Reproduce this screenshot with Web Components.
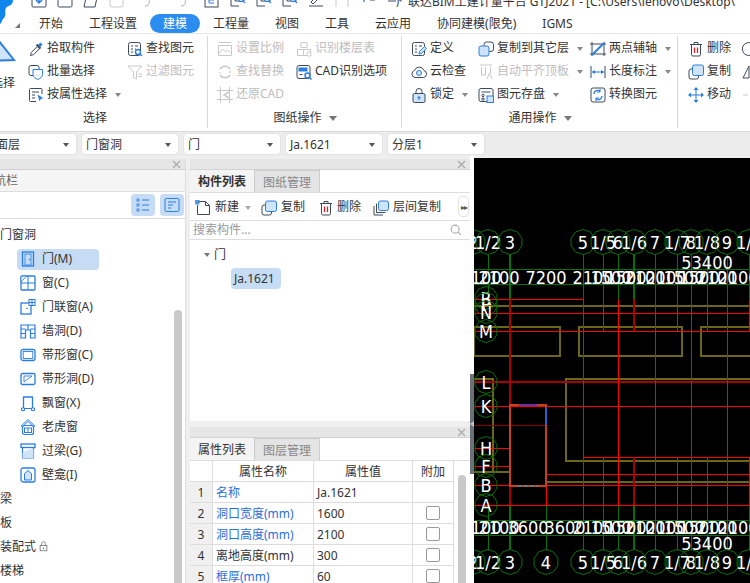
<!DOCTYPE html>
<html lang="zh">
<head>
<meta charset="utf-8">
<title>GTJ2021</title>
<style>
  html, body { margin: 0; padding: 0; width: 750px; height: 583px; overflow: hidden; background: #ececec; }
  body { font: 12px/1.2 "Noto Sans", "Noto Sans CJK SC", sans-serif; color: #333; }
</style>
</head>
<body>
<gtj-titlebar></gtj-titlebar>
<gtj-tabs></gtj-tabs>
<gtj-ribbon>
  <gtj-group label="选择" style="width:226px" cols="38px 99px 1fr" pad="8">
    <gtj-big icon="select">选择</gtj-big>
    <gtj-item icon="pick">拾取构件</gtj-item>
    <gtj-item icon="find">查找图元</gtj-item>
    <gtj-item icon="batch">批量选择</gtj-item>
    <gtj-item icon="filter" disabled>过滤图元</gtj-item>
    <gtj-item icon="attr" caret>按属性选择</gtj-item>
  </gtj-group>
  <gtj-group label="图纸操作" caret style="width:194px" cols="79px 1fr" pad="9">
    <gtj-item icon="scale" disabled>设置比例</gtj-item>
    <gtj-item icon="floor" disabled>识别楼层表</gtj-item>
    <gtj-item icon="replace" disabled>查找替换</gtj-item>
    <gtj-item icon="cad">CAD识别选项</gtj-item>
    <gtj-item icon="restore" disabled>还原CAD</gtj-item>
  </gtj-group>
  <gtj-group label="通用操作" caret style="width:276px" cols="67px 112px 1fr" pad="9">
    <gtj-item icon="define">定义</gtj-item>
    <gtj-item icon="copyto" caret>复制到其它层</gtj-item>
    <gtj-item icon="axis" caret>两点辅轴</gtj-item>
    <gtj-item icon="cloud">云检查</gtj-item>
    <gtj-item icon="align" disabled caret>自动平齐顶板</gtj-item>
    <gtj-item icon="dim" caret>长度标注</gtj-item>
    <gtj-item icon="lock" caret>锁定</gtj-item>
    <gtj-item icon="store" caret>图元存盘</gtj-item>
    <gtj-item icon="convert">转换图元</gtj-item>
  </gtj-group>
  <gtj-group style="width:90px;border:0" cols="54px 1fr" pad="10">
    <gtj-item icon="trash">删除</gtj-item>
    <gtj-item icon="rotate"></gtj-item>
    <gtj-item icon="copy">复制</gtj-item>
    <gtj-item icon="mirror"></gtj-item>
    <gtj-item icon="move">移动</gtj-item>
    <gtj-item icon="dash"></gtj-item>
  </gtj-group>
</gtj-ribbon>
<gtj-selects>
  <gtj-select>屋面层</gtj-select>
  <gtj-select>门窗洞</gtj-select>
  <gtj-select>门</gtj-select>
  <gtj-select>Ja.1621</gtj-select>
  <gtj-select>分层1</gtj-select>
</gtj-selects>
<gtj-workspace>
  <gtj-nav slot="left"></gtj-nav>
  <gtj-panel slot="mid" style="height:262px" first="构件列表" second="图纸管理" bold>
    <gtj-list-tools></gtj-list-tools>
    <gtj-comp-tree></gtj-comp-tree>
  </gtj-panel>
  <gtj-panel slot="mid" style="flex:1;margin-top:6px" first="属性列表" second="图层管理">
    <gtj-props></gtj-props>
  </gtj-panel>
  <gtj-cad slot="canvas"></gtj-cad>
</gtj-workspace>

<script>
// iconos dibujados a mano, todos en una caja de 16x16
const k = '#3d4a5a', b = '#2a7de1', l = '#cfe3f9', g = '#c9c9c9';
const s = (c, w = 1) => `fill="none" stroke="${c}" stroke-width="${w}"`;
const ICONS = {
  select: `<path d="M-8 22L9 2L24 21z" fill="${l}" stroke="${b}" stroke-width="2"/>`,
  pick: `<path d="M2.500 14.500l.8-3 6-6 2.200 2.200-6 6z" fill="#fff" ${s(k)}/><path d="M8.500 3.500l4 4" ${s(k, 2)}/><path d="M11 5l2.500-2.500" ${s(b, 3)}/>`,
  find: `<rect x="1.500" y="1.500" width="12" height="13" rx="2" ${s(k)}/><path d="M4 5h2M8 5h3M4 8h2M8 8h1M4 11h2" ${s(k)}/><circle cx="11" cy="11" r="2.500" fill="#fff" ${s(b, 1.400)}/><path d="M13 13l2 2" ${s(b, 1.400)}/>`,
  batch: `<rect x="1" y="1.500" width="10" height="10" rx="2" ${s(k)}/><path d="M5 5.500h9.500v5c0 2.500-2.500 4-4.700 5-2.300-1-4.800-2.500-4.800-5z" fill="#fff" ${s(b)}/><path d="M8 10l2 2 2.500-2.500" ${s(l)}/>`,
  filter: `<path d="M1 2h14l-5.500 6v7l-3-1.500V8z" ${s(g)}/><path d="M11 10h4M11 12.500h4" ${s(g)}/>`,
  attr: `<path d="M14 7V2.500a1 1 0 0 0-1-1H2.500a1 1 0 0 0-1 1v11a1 1 0 0 0 1 1H8" ${s(k)}/><path d="M4 5h7M4 8h3M4 11h3" ${s(k)}/><path d="M9.500 7.500l6 3.700-2.500.6-1.500 2.500z" fill="${b}"/>`,
  scale: `<path d="M1.500 4.500h13v10h-13zM1.500 1.500h13" ${s(g)}/><path d="M2 12l3.500-4 3 3 2-2 3.500 3.500" ${s(g)}/>`,
  floor: `<path d="M5 1.500h6v5H5zM1.500 8.500h6v6h-6zM7.500 8.500h7v6h-7z" ${s(g)}/><circle cx="13" cy="13" r="2.200" fill="#fff" ${s(g)}/>`,
  replace: `<path d="M3 5a6 6 0 0 1 10 0M13 11a6 6 0 0 1-10 0" ${s(g, 1.400)}/><path d="M3 8a5 5 0 0 0 0 1M13 7a5 5 0 0 1 0 2" ${s(g, 1.400)}/>`,
  cad: `<rect x="1" y="1.500" width="13" height="13" rx="2" ${s(k)}/><rect x="2.500" y="3.500" width="9" height="4" fill="${b}"/><path d="M3.500 10.500h3" ${s(k)}/><circle cx="11.500" cy="11.500" r="2.500" fill="#fff" ${s(b, 1.400)}/><path d="M13.500 13.500l2 2" ${s(b, 1.400)}/>`,
  restore: `<path d="M3.500 0v16M0 3.500h16M12.500 0v16M0 12.500h16" ${s(g)}/><path d="M12 5L7 8l5 3" ${s(g, 1.500)}/>`,
  define: `<rect x="1.500" y="1.500" width="12" height="13" rx="2" ${s(k)}/><path d="M4 5h2M8 5h3M4 8h2M4 11h2" ${s(k)}/><path d="M8 13l.5-2.500 5-5 2 2-5 5z" fill="${l}" ${s(b)}/>`,
  copyto: `<rect x="6" y="1" width="9.500" height="9.500" rx="2.500" fill="#fff" ${s(k)}/><rect x="1" y="5" width="10" height="10" rx="2" fill="${l}" ${s(b)}/>`,
  axis: `<path d="M2 1v14M14 1v14M0 3h16M0 13h16" ${s(k)}/><path d="M2 14L14 2" ${s(b, 2)}/>`,
  cloud: `<path d="M4 13.500a3.600 3.600 0 0 1-.5-7A5 5 0 0 1 13 6.500a3.600 3.600 0 0 1-.5 7z" ${s(k)}/><circle cx="8" cy="9" r="2.500" fill="${l}" ${s(b)}/>`,
  align: `<path d="M2 1h12M3.500 3v8M7.500 3v8M3.500 11h4M12.500 3v6" ${s(g)}/><path d="M9 15l2.500-6 2.500 6" ${s(g)}/>`,
  dim: `<path d="M1 2v12M15 2v12" ${s(k)}/><path d="M2 8h12" ${s(b)}/><path d="M2 8l3-2v4zM14 8l-3-2v4z" fill="${b}"/>`,
  lock: `<path d="M5 7V4.500a3 3 0 0 1 6 0V7" ${s(k)}/><rect x="2" y="6.500" width="12" height="9" rx="1.500" fill="${l}" ${s(k)}/><path d="M8 9l2 2H6zM7.400 11h1.200v2H7.400z" fill="${b}"/>`,
  store: `<rect x="1" y="1.500" width="14" height="13" rx="2" ${s(k)}/><path d="M3.500 5h9" ${s(k)}/><circle cx="5" cy="8.500" r="1.200" ${s(k)}/><circle cx="5" cy="12" r="1.200" ${s(k)}/><rect x="9" y="9" width="6.500" height="6.500" fill="${l}" stroke="${b}"/>`,
  convert: `<rect x="1" y="1" width="14" height="14" rx="2" ${s(k)}/><path d="M4 7a3.500 3.500 0 0 1 6-2.500M12 9a3.500 3.500 0 0 1-6 2.500" ${s(b, 1.400)}/><path d="M10 2v3H7M6 14v-3h3" ${s(b)}/>`,
  trash: `<path d="M2 3.500h12M6 3.500V1.500h4v2M3.500 3.500v10a1.500 1.500 0 0 0 1.500 1.500h6a1.500 1.500 0 0 0 1.500-1.500v-10" ${s(k)}/><path d="M6.500 6.500v5.500M9.500 6.500v5.500" ${s('#e02020', 1.300)}/>`,
  copy: `<rect x="1" y="5" width="9.500" height="10" rx="2" ${s(k)}/><rect x="4.500" y="1" width="11" height="10.500" rx="2" fill="${l}" ${s(b)}/>`,
  move: `<path d="M8 3v10M3 8h10" ${s(b)}/><path d="M8 0l2.500 3h-5zM8 16l2.500-3h-5zM0 8l3-2.500v5zM16 8l-3-2.500v5z" fill="${b}"/>`,
  rotate: `<path d="M11 3a6.500 6.500 0 1 0 0 10" ${s(k)}/>`,
  mirror: `<path d="M7 2v12H1zM10 2v12" ${s(k)}/>`,
  dash: `<path d="M1 8h5M9 8h5" ${s(g)}/>`,
  neu: `<path d="M3.500 3v-1.500h7l4 4v9h-12V5" ${s(k)}/><path d="M10.500 1.500v4h4" ${s(k)}/><rect x="0" y="0" width="4.500" height="4.500" fill="${b}" opacity=".8"/>`,
  layer: `<path d="M1 6v9h9M3.500 3.500v9h9" ${s(k)}/><rect x="5.500" y="1" width="10" height="9.500" rx="2" fill="${l}" ${s(b)}/>`,
  door: `<rect x="2.500" y="1" width="11" height="14" ${s(b, 1.300)}/><rect x="5" y="3" width="6" height="11" ${s(b, .8)}/><circle cx="9.500" cy="8.500" r=".8" fill="${b}"/>`,
  win: `<rect x="1" y="1" width="14" height="14" rx="1" ${s(b, 1.300)}/><path d="M8 1v14M1 8h14" ${s(b)}/><path d="M1 7l6-6H1z" fill="${l}" stroke="${b}" stroke-width=".7"/>`,
  doorwin: `<rect x="1" y="4" width="10" height="11" ${s(b, 1.300)}/><circle cx="7" cy="9.500" r=".8" fill="${b}"/><rect x="9" y="0.500" width="6" height="6" fill="#fff" ${s(b)}/><path d="M12 .5v6M9 3.500h6" ${s(b)}/>`,
  wall: `<path d="M1 2h14v13h-4.500V7h-5v8H1zM1 6h4.500M10.500 6H15M1 10.500h4.500M10.500 10.500H15M8 2v5" ${s(b, 1.200)}/>`,
  strip: `<rect x="1" y="2.500" width="14" height="11" rx="2" ${s(b, 1.300)}/><rect x="3.200" y="4.500" width="9.600" height="7" ${s(b, .9)}/>`,
  striph: `<rect x="1" y="2.500" width="14" height="11" rx="1.500" ${s(b, 1.300)}/><path d="M4 11V5h8L4 11z" ${s(b, .9)}/>`,
  bay: `<path d="M3.500 13V2h9v11" ${s(b, 1.300)}/><path d="M1.500 13h3v2.500h-3zM11.500 13h3v2.500h-3z" ${s(b)}/><path d="M4.500 13.500h7" ${s(b)}/>`,
  dormer: `<path d="M8 .5L1 7l1.200 1L8 2.500 13.800 8 15 7z" fill="${l}" stroke="${b}" stroke-width=".8"/><rect x="2.500" y="6.500" width="11" height="9" rx="2" ${s(b, 1.200)}/><rect x="4.500" y="9" width="7" height="4.500" ${s(b)}/><path d="M8 9v4.500" ${s(b)}/>`,
  lintel: `<rect x="1" y="1" width="14" height="3.500" ${s(b, 1.300)}/><path d="M2.500 5v10h11V5" ${s(b, 1.200)}/><path d="M2.500 15V10q5-4 11-4v9z" fill="${l}"/>`,
  niche: `<rect x="1" y="1" width="14" height="14" rx="2" ${s(b, 1.300)}/><path d="M4.500 13V6.500L8 3.500l3.500 3V13z" fill="${l}" ${s(b)}/>`,
  padlock: `<rect x="1.500" y="6" width="9" height="7" ${s('#666')}/><path d="M3.500 6V3.500a2.500 2.500 0 0 1 5 0V6" ${s('#666')}/><circle cx="6" cy="9.500" r="1" fill="#666"/>`,
  search: `<circle cx="7" cy="7" r="4.500" ${s('#aaa', 1.300)}/><path d="M10.500 10.500l3 3" ${s('#aaa', 1.300)}/>`,
  list: `<path d="M7 3h7M7 8h7M7 13h7" ${s(b)}/><rect x="2" y="2" width="2" height="2" ${s(b, .8)}/><rect x="2" y="7" width="2" height="2" ${s(b, .8)}/><rect x="2" y="12" width="2" height="2" ${s(b, .8)}/>`,
  detail: `<rect x="1" y="1.500" width="14" height="13" rx="1.500" ${s(b)}/><path d="M4 5h8M4 8h5M4 11h3" ${s(b)}/>`,
  save: `<rect x="1" y="1" width="14" height="14" rx="1" ${s(k)}/><path d="M8 3v7M5 8l3 3 3-3" ${s(b, 1.500)}/>`,
  sq: `<rect x="1" y="1" width="14" height="14" rx="1.500" ${s(k)}/>`,
  para: `<path d="M4 1h11l-3 14H1z" ${s(k)}/>`,
  disk: `<rect x="1" y="1" width="13" height="14" rx="2" ${s(g)}/>`,
  undo: `<path d="M2 5h8a4 4 0 0 1 0 9" ${s(g, 1.400)}/>`,
  two: `<rect x="1" y="1" width="13" height="14" ${s(k)}/><path d="M5 5h5v3H5v3h5" ${s(b)}/>`,
  mag: `<path d="M1 0v14h8M5 0v9h9V0" ${s(k)}/><circle cx="11" cy="7" r="2.500" fill="#fff" ${s(b, 1.300)}/><path d="M13 9l2 2" ${s(b, 1.300)}/>`,
  pen: `<path d="M1 14h14M3 10l8-8 2 2-8 8z" ${s(k)}/>`,
  grid: `<path d="M2 1v14M14 1v14M1 3h14M1 7h14" ${s(g)}/>`,
  plus: `<path d="M4 3v7M1 6.500h7" ${s(b, 1.300)}/><path d="M10 4h5M10 8h5" ${s(k)}/>`,
  menu: `<path d="M0 2h8M0 5h8" ${s(k)}/><path d="M10 3l5 0-2.500 3z" fill="#777"/>`
};

class Base extends HTMLElement {
  constructor() {
    super();
    this.attachShadow({ mode: 'open' });
  }
  connectedCallback() {
    this.shadowRoot.innerHTML = `<style>${this.css()}</style>${this.html()}`;
  }
  css() { return ':host{display:block}'; }
  html() { return '<slot></slot>'; }
}

class GtjIcon extends Base {
  css() { return ':host{display:inline-flex;flex:none;line-height:0} svg{overflow:visible;display:block}'; }
  html() {
    const size = this.getAttribute('size') || 16;
    return `<svg width="${size}" height="${size}" viewBox="0 0 16 16">${ICONS[this.getAttribute('name')] || ''}</svg>`;
  }
}

class GtjTitlebar extends Base {
  css() {
    return `:host{display:block;height:12px;background:#fff;position:relative;overflow:hidden}
      .row{display:flex;align-items:flex-start;margin-top:-8px;height:20px;padding-left:31px}
      .title{position:absolute;left:396px;top:-6px;white-space:nowrap;font-size:12px;line-height:16px;color:#333}
      .menu{position:absolute;left:388px;top:-4px}`;
  }
  html() {
    const list = ['save', 'sq', 'para', 'disk', 'undo', 'undo', 'two', 'mag', 'mag', 'mag', 'pen', 'grid', 'plus'];
    const gaps = { 4: 20, 5: 17 };
    return `<div class="row">${list.map((n, i) => `<gtj-icon name="${n}" style="margin-right:${gaps[i] || 10}px"></gtj-icon>`).join('')}</div>
      <gtj-icon class="menu" name="menu"></gtj-icon>
      <div class="title">广联达BIM土建计量平台 GTJ2021 - [C:\\Users\\lenovo\\Desktop\\</div>`;
  }
}

class GtjTabs extends Base {
  css() {
    return `:host{display:flex;height:21px;background:#fff;border-bottom:1px solid #e8e8e8;padding-left:26px;position:relative;align-items:flex-end;box-sizing:content-box}
      span{padding:0 13px;height:19px;line-height:19px;white-space:nowrap;border-radius:10px;flex:none}
      .on{background:#2b8df0;color:#fff}
      .logo{position:absolute;left:0;top:-12px}
      .tri{position:absolute;left:15px;top:11px}`;
  }
  html() {
    const tabs = ['开始', '工程设置', '建模', '工程量', '视图', '工具', '云应用', '协同建模(限免)', 'IGMS'];
    return `<svg class="logo" width="14" height="26"><path d="M0 0H13C13 6 8 5 6 8S7 15 4 18 2 23 0 24z" fill="#0f86ee"/></svg>
      <svg class="tri" width="5" height="5"><path d="M0 5L5 0V5z" fill="#777"/></svg>
      ${tabs.map(t => `<span class="${t === '建模' ? 'on' : ''}">${t}</span>`).join('')}`;
  }
}

class GtjRibbon extends Base {
  css() { return ':host{display:flex;height:97px;background:#fff;margin-left:-18px;border-bottom:1px solid #d9d9d9;box-sizing:content-box}'; }
}

class GtjGroup extends Base {
  css() {
    const cols = this.getAttribute('cols');
    return `:host{display:flex;flex-direction:column;flex:none;box-sizing:border-box;position:relative;overflow:visible}
      :host::after{content:"";position:absolute;right:0;top:2px;bottom:3px;width:1px;background:${this.style.border ? 'transparent' : '#d8d8d8'}}
      .grid{display:grid;grid-template-columns:${cols};grid-auto-rows:23px;height:68px;padding:3px 0 0 ${this.getAttribute('pad')}px}
      .label{flex:1;display:flex;align-items:center;justify-content:center;gap:7px}
      .c{width:0;height:0;border:4px solid transparent;border-top:5px solid #777;border-bottom:0}`;
  }
  html() {
    const label = this.getAttribute('label') || '';
    return `<div class="grid"><slot></slot></div>
      <div class="label">${label}${this.hasAttribute('caret') ? '<i class="c"></i>' : ''}</div>`;
  }
}

class GtjBig extends Base {
  css() {
    return `:host{display:flex;flex-direction:column;align-items:center;grid-row:1 / span 3;width:26px;white-space:nowrap;margin-top:2px}
      svg{overflow:visible;margin-bottom:13px}`;
  }
  html() { return `<svg width="26" height="24" viewBox="0 0 26 24">${ICONS.select}</svg><slot></slot>`; }
}

class GtjItem extends Base {
  css() {
    return `:host{display:flex;align-items:center;gap:3px;white-space:nowrap;${this.hasAttribute('disabled') ? 'color:#bdbdbd' : ''}}
      .c{width:0;height:0;border:3.500px solid transparent;border-top:4px solid #888;border-bottom:0;margin-left:5px}`;
  }
  html() {
    return `<gtj-icon name="${this.getAttribute('icon')}"></gtj-icon><slot></slot>${this.hasAttribute('caret') ? '<i class="c"></i>' : ''}`;
  }
}

class GtjSelects extends Base {
  css() { return ':host{display:flex;gap:4px;height:22px;padding:1px 0;margin-left:-21px;background:#ececec;box-sizing:content-box}'; }
}

class GtjSelect extends Base {
  css() {
    return `:host{display:flex;align-items:center;justify-content:space-between;flex:none;width:98px;height:22px;box-sizing:border-box;background:#fff;border-radius:4px;padding:2px 7px 0 4px;border:1px solid #e4e4e4}
      i{width:0;height:0;border:3.500px solid transparent;border-top:4px solid #555;border-bottom:0}`;
  }
  html() { return '<span><slot></slot></span><i></i>'; }
}

class GtjWorkspace extends Base {
  css() {
    return `:host{display:flex;height:427px;background:#efefef}
      .left{display:flex;flex:none;width:204px;margin-left:-18px;padding-top:3px;box-sizing:border-box;height:100%}
      .mid{display:flex;flex-direction:column;flex:none;width:280px;margin-left:4px;padding-top:3px;box-sizing:border-box}
      .split{flex:none;width:4px;background:#fff}
      .split div{height:100px;margin-top:218px;background:#6b7178;display:flex;align-items:center;justify-content:center}
      .split i{width:0;height:0;border:3px solid transparent;border-right:4px solid #c4c4c4;border-left:0}
      .cv{flex:1;min-width:0;margin-top:2px}`;
  }
  html() {
    return `<div class="left"><slot name="left"></slot></div>
      <div class="mid"><slot name="mid"></slot></div>
      <div class="split"><div><i></i></div></div>
      <div class="cv"><slot name="canvas"></slot></div>`;
  }
}

class GtjBar extends Base {
  css() {
    return `:host{display:flex;justify-content:flex-end;align-items:center;flex:none;height:11px;box-sizing:border-box;background:#e6e6e6;border-bottom:1px solid #d2d2d2;padding-right:4px}`;
  }
  html() { return '<svg width="9" height="9"><path d="M1 1l7 7M8 1l-7 7" stroke="#aaa" stroke-width="1.200" fill="none"/></svg>'; }
}

class GtjNav extends Base {
  css() {
    return `:host{display:flex;flex-direction:column;flex:1;background:#fff;position:relative;overflow:hidden;border-right:1px solid #ddd;box-sizing:border-box}
      .head{height:21px;line-height:21px;background:#f5f5f5;border-bottom:1px solid #ddd;color:#666;flex:none}
      .tools{height:27px;flex:none;display:flex;justify-content:flex-end;align-items:center;gap:5px;padding-right:1px;border-bottom:1px solid #ddd;box-sizing:border-box}
      .tools div{width:24px;height:22px;border-radius:4px;background:#c5dcf4;display:flex;align-items:center;justify-content:center}
      .tree{padding-top:4px}
      .thumb{position:absolute;left:192px;top:151px;bottom:0;width:8px;border-radius:4px 4px 0 0;background:#c9c9c9}`;
  }
  html() {
    const items = [['door', '门(M)', 1], ['win', '窗(C)'], ['doorwin', '门联窗(A)'], ['wall', '墙洞(D)'], ['strip', '帯形窗(C)'],
      ['striph', '帯形洞(D)'], ['bay', '飘窗(X)'], ['dormer', '老虎窗'], ['lintel', '过梁(G)'], ['niche', '壁龛(I)']];
    return `<gtj-bar></gtj-bar>
      <div class="head">导航栏</div>
      <div class="tools"><div><gtj-icon name="list"></gtj-icon></div><div><gtj-icon name="detail"></gtj-icon></div></div>
      <div class="tree">
        <gtj-nav-row top>门窗洞</gtj-nav-row>
        ${items.map(i => `<gtj-nav-row icon="${i[0]}" ${i[2] ? 'selected' : ''}>${i[1]}</gtj-nav-row>`).join('')}
        <gtj-nav-row top>梁</gtj-nav-row>
        <gtj-nav-row top>板</gtj-nav-row>
        <gtj-nav-row top>装配式 <gtj-icon name="padlock" size="12"></gtj-icon></gtj-nav-row>
        <gtj-nav-row top>楼梯</gtj-nav-row>
      </div>
      <div class="thumb"></div>`;
  }
}

class GtjNavRow extends Base {
  css() {
    return `:host{display:flex;align-items:center;height:24px;padding-left:${this.hasAttribute('top') ? 18 : 35}px;white-space:nowrap}
      .in{display:flex;align-items:center;gap:6px;height:21px;width:79px;padding-left:3px;border-radius:4px;${this.hasAttribute('selected') ? 'background:#c5dcf4' : ''}}
      .t{display:flex;align-items:center;gap:3px}`;
  }
  html() {
    if (this.hasAttribute('top')) return '<div class="t"><slot></slot></div>';
    return `<div class="in"><gtj-icon name="${this.getAttribute('icon')}"></gtj-icon><slot></slot></div>`;
  }
}

class GtjPanel extends Base {
  css() {
    return `:host{display:flex;flex-direction:column;background:#fff;overflow:hidden;min-height:0}
      .tabs{display:flex;flex:none;height:23px;box-sizing:border-box;border-bottom:1px solid #ddd}
      .tabs div{width:65px;text-align:center;line-height:23px;box-sizing:border-box}
      .a{background:#f4f4f4;border-right:1px solid #ccc;${this.hasAttribute('bold') ? 'font-weight:700;' : ''}}
      .b{background:#e4e4e4;color:#888;border-right:1px solid #ccc;border-top:1px solid #ccc}
      .body{flex:1;min-height:0;display:flex;flex-direction:column}`;
  }
  html() {
    return `<gtj-bar></gtj-bar>
      <div class="tabs"><div class="a">${this.getAttribute('first')}</div><div class="b">${this.getAttribute('second')}</div></div>
      <div class="body"><slot></slot></div>`;
  }
}

class GtjListTools extends Base {
  css() {
    return `:host{display:flex;align-items:center;height:28px;flex:none;box-sizing:border-box;padding:2px 0 0 5px;border-bottom:1px solid #ddd;position:relative;white-space:nowrap}
      span{display:flex;align-items:center;gap:4px;flex:none}
      i{width:0;height:0;border:3.500px solid transparent;border-top:4px solid #aaa;border-bottom:0;margin-left:2px}
      .more{position:absolute;left:268px;top:3px;width:9px;height:19px;border:1px solid #e4e4e4;border-radius:4px;font-size:8px;line-height:19px;text-align:center;color:#555;letter-spacing:-1px;background:#fff}`;
  }
  html() {
    return `<span style="margin-right:10px"><gtj-icon name="neu"></gtj-icon>新建<i></i></span>
      <span style="margin-right:13px"><gtj-icon name="copy"></gtj-icon>复制</span>
      <span style="margin-right:12px;gap:3px"><gtj-icon name="trash"></gtj-icon>删除</span>
      <span><gtj-icon name="layer"></gtj-icon>层间复制</span>
      <div class="more">▸▸</div>`;
  }
}

class GtjCompTree extends Base {
  css() {
    return `:host{display:block;flex:1}
      .s{display:flex;justify-content:space-between;align-items:center;height:18px;box-sizing:content-box;border-bottom:1px solid #ddd;padding:0 7px 0 3px;color:#999;line-height:20px}
      .g{display:flex;align-items:center;height:24px;margin-top:3px;padding-left:14px;gap:4px}
      .g i{width:0;height:0;border:3.500px solid transparent;border-top:4px solid #777;border-bottom:0}
      .p{margin:1px 0 0 41px;width:50px;height:21px;line-height:21px;border-radius:4px;background:#c5dcf4;box-sizing:border-box;padding-left:3px}`;
  }
  html() {
    return `<div class="s">搜索构件...<gtj-icon name="search" size="14"></gtj-icon></div>
      <div class="g"><i></i>门</div>
      <div class="p">Ja.1621</div>`;
  }
}

class GtjProps extends Base {
  css() {
    return `:host{display:flex;flex:1;min-height:0;overflow:hidden}
      .t{display:grid;grid-template-columns:23px 101px 99px 41px;grid-auto-rows:21px;flex:none;align-content:start}
      .t div{border-right:1px solid #ddd;border-bottom:1px solid #ddd;box-sizing:border-box;line-height:22px;padding-left:3px;white-space:nowrap}
      .t .n{background:#f0f0f0;text-align:center;padding:0}
      .t .h{text-align:center;padding:0}
      .t .blue{color:#2a6fe0}
      .t .c{display:flex;align-items:center;justify-content:center;padding:0}
      .t .c b{display:block;width:14px;height:14px;box-sizing:border-box;border:1px solid #999;border-radius:2px}
      .sb{flex:1;position:relative}
      .sb u{position:absolute;left:4px;top:14px;bottom:0;width:8px;border-radius:4px 4px 0 0;background:#c9c9c9}`;
  }
  html() {
    const rows = [['名称', 'Ja.1621', 1, 0], ['洞口宽度(mm)', '1600', 1, 1], ['洞口高度(mm)', '2100', 1, 1], ['离地高度(mm)', '300', 0, 1], ['框厚(mm)', '60', 1, 1]];
    return `<div class="t"><div class="n" style="background:#fff"></div><div class="h">属性名称</div><div class="h">属性值</div><div class="h">附加</div>
      ${rows.map((r, i) => `<div class="n">${i + 1}</div><div class="${r[2] ? 'blue' : ''}">${r[0]}</div><div>${r[1]}</div><div class="c">${r[3] ? '<b></b>' : ''}</div>`).join('')}
      </div><div class="sb"><u></u></div>`;
  }
}

class GtjCad extends Base {
  css() { return ':host{display:block;width:100%;height:100%;background:#000;overflow:hidden} svg{display:block}'; }
  html() {
    const RED = '#ff0000', DARK = '#a60000', OLIVE = '#6b6618', GREEN = '#0a700a';
    // grosor impar: se desplaza medio píxel para que la línea caiga en un píxel exacto
    const off = w => (w % 2 ? .5 : 0);
    const line = (x1, y1, x2, y2, c, w = 1) => `<line x1="${x1 + off(w)}" y1="${y1 + off(w)}" x2="${x2 + off(w)}" y2="${y2 + off(w)}" stroke="${c}" stroke-width="${w}"/>`;
    const rect = (x, y, w, h, c, sw = 1) => `<rect x="${x + off(sw)}" y="${y + off(sw)}" width="${w}" height="${h}" fill="none" stroke="${c}" stroke-width="${sw}"/>`;
    const text = (x, y, t, size = 18) => `<text x="${x}" y="${y}" font-size="${size}" text-anchor="middle" dominant-baseline="central">${t}</text>`;
    const bubble = (x, y, t, r = 12.5) => {
      const pts = [];
      for (let i = 0; i < 10; i++) {
        const a = Math.PI * 2 * (i + .5) / 10;
        pts.push((x + r * Math.cos(a)).toFixed(1) + ',' + (y + r * Math.sin(a)).toFixed(1));
      }
      return `<polygon points="${pts.join(' ')}" fill="none" stroke="${GREEN}"/>` + text(x, y, t);
    };
    const topAxes = [[473, '2'], [488, '1/2'], [510, '3'], [583, '5'], [603, '1/5'], [618, '6'], [634, '1/6'], [655, '7'], [677, '1/7'], [691, '8'], [707, '1/8'], [727, '9'], [749, '1/9']];
    const xs = [488, 510, 583, 603, 618, 634, 655, 677, 691, 707, 727, 749];
    const longs = [583, 618, 655, 691, 727];
    const shorts = [603, 677, 707, 749];
    let o = '';
    // ejes verdes y cotas
    xs.forEach(x => {
      const w = x === 510 || x === 634 ? 2 : 1;
      o += line(x, 254, x, 299, GREEN, w) + line(x, 505, x, 550, GREEN, w);
    });
    o += line(546, 505, 546, 550, GREEN);
    [269, 284, 520, 535].forEach(y => { o += line(474, y, 750, y, GREEN); });
    // muros en oliva
    o += rect(474, 327, 86, 29, OLIVE, 2) + rect(579, 327, 103, 29, OLIVE, 2) + rect(701, 327, 60, 29, OLIVE, 2);
    o += line(474, 306, 750, 306, OLIVE, 2);
    o += rect(566, 379, 200, 82, OLIVE, 2) + rect(460, 379, 33, 93, OLIVE, 2);
    o += line(474, 472, 510, 472, OLIVE, 2) + line(546, 482, 750, 482, OLIVE, 2);
    // rejilla roja
    o += line(474, 299, 583, 299, RED) + line(474, 313, 750, 313, RED) + line(474, 331, 750, 331, RED);
    o += line(474, 382, 750, 382, DARK, 2) + line(474, 406, 750, 406, RED);
    o += line(583, 457, 750, 457, RED) + line(546, 474, 750, 474, RED);
    o += line(474, 485, 750, 485, RED) + line(474, 505, 750, 505, RED);
    o += line(474, 425, 546, 425, '#8a0000') + line(474, 448, 510, 448, RED) + line(474, 466, 510, 466, RED);
    longs.forEach(x => { o += line(x, 299, x, 505, RED); });
    shorts.forEach(x => { o += line(x, 299, x, 331, RED) + line(x, 457, x, 505, RED); });
    o += line(634, 299, 634, 331, DARK, 2) + line(634, 457, 634, 505, DARK, 2);
    o += line(510, 299, 510, 505, DARK, 2);
    o += line(546, 406, 546, 505, RED);
    // hueco seleccionado
    o += rect(510, 405, 36, 81, '#c8401a', 2);
    o += line(519, 405, 537, 405, '#6a2fa0', 2) + line(546, 407, 546, 425, '#2a60d0', 2);
    o += `<line x1="518" y1="486" x2="538" y2="486" stroke="#777" stroke-width="2" stroke-dasharray="4 2"/>`;
    // textos de cota
    const mids = [[481, '2100'], [499, '2100'], [593, '2100'], [611, '1500'], [626, '1500'], [645, '2100'], [666, '2100'], [684, '1500'], [699, '1500'], [717, '2100'], [738, '2100']];
    mids.forEach(m => { o += text(m[0], 277, m[1]) + text(m[0], 527, m[1]); });
    o += text(546, 277, '7200') + text(528, 527, '3600') + text(565, 527, '3600');
    o += text(707, 262, '53400') + text(707, 543, '53400');
    // burbujas
    topAxes.forEach(a => { o += bubble(a[0], 242, a[1]) + bubble(a[0], 562, a[1]); });
    o += bubble(546, 562, '4');
    [['R', 298], ['P', 304], ['N', 312], ['M', 331], ['L', 382], ['K', 406], ['H', 448], ['F', 466], ['B', 485], ['A', 505]].forEach(a => {
      o += bubble(486, a[1], a[0], 11.5);
    });
    return `<svg width="276" height="425" viewBox="474 158 276 425" fill="#fff" font-family="'DejaVu Sans Condensed','DejaVu Sans',sans-serif" font-stretch="condensed">${o}</svg>`;
  }
}

customElements.define('gtj-icon', GtjIcon);
customElements.define('gtj-titlebar', GtjTitlebar);
customElements.define('gtj-tabs', GtjTabs);
customElements.define('gtj-ribbon', GtjRibbon);
customElements.define('gtj-group', GtjGroup);
customElements.define('gtj-big', GtjBig);
customElements.define('gtj-item', GtjItem);
customElements.define('gtj-selects', GtjSelects);
customElements.define('gtj-select', GtjSelect);
customElements.define('gtj-workspace', GtjWorkspace);
customElements.define('gtj-bar', GtjBar);
customElements.define('gtj-nav', GtjNav);
customElements.define('gtj-nav-row', GtjNavRow);
customElements.define('gtj-panel', GtjPanel);
customElements.define('gtj-list-tools', GtjListTools);
customElements.define('gtj-comp-tree', GtjCompTree);
customElements.define('gtj-props', GtjProps);
customElements.define('gtj-cad', GtjCad);
</script>
</body>
</html>
